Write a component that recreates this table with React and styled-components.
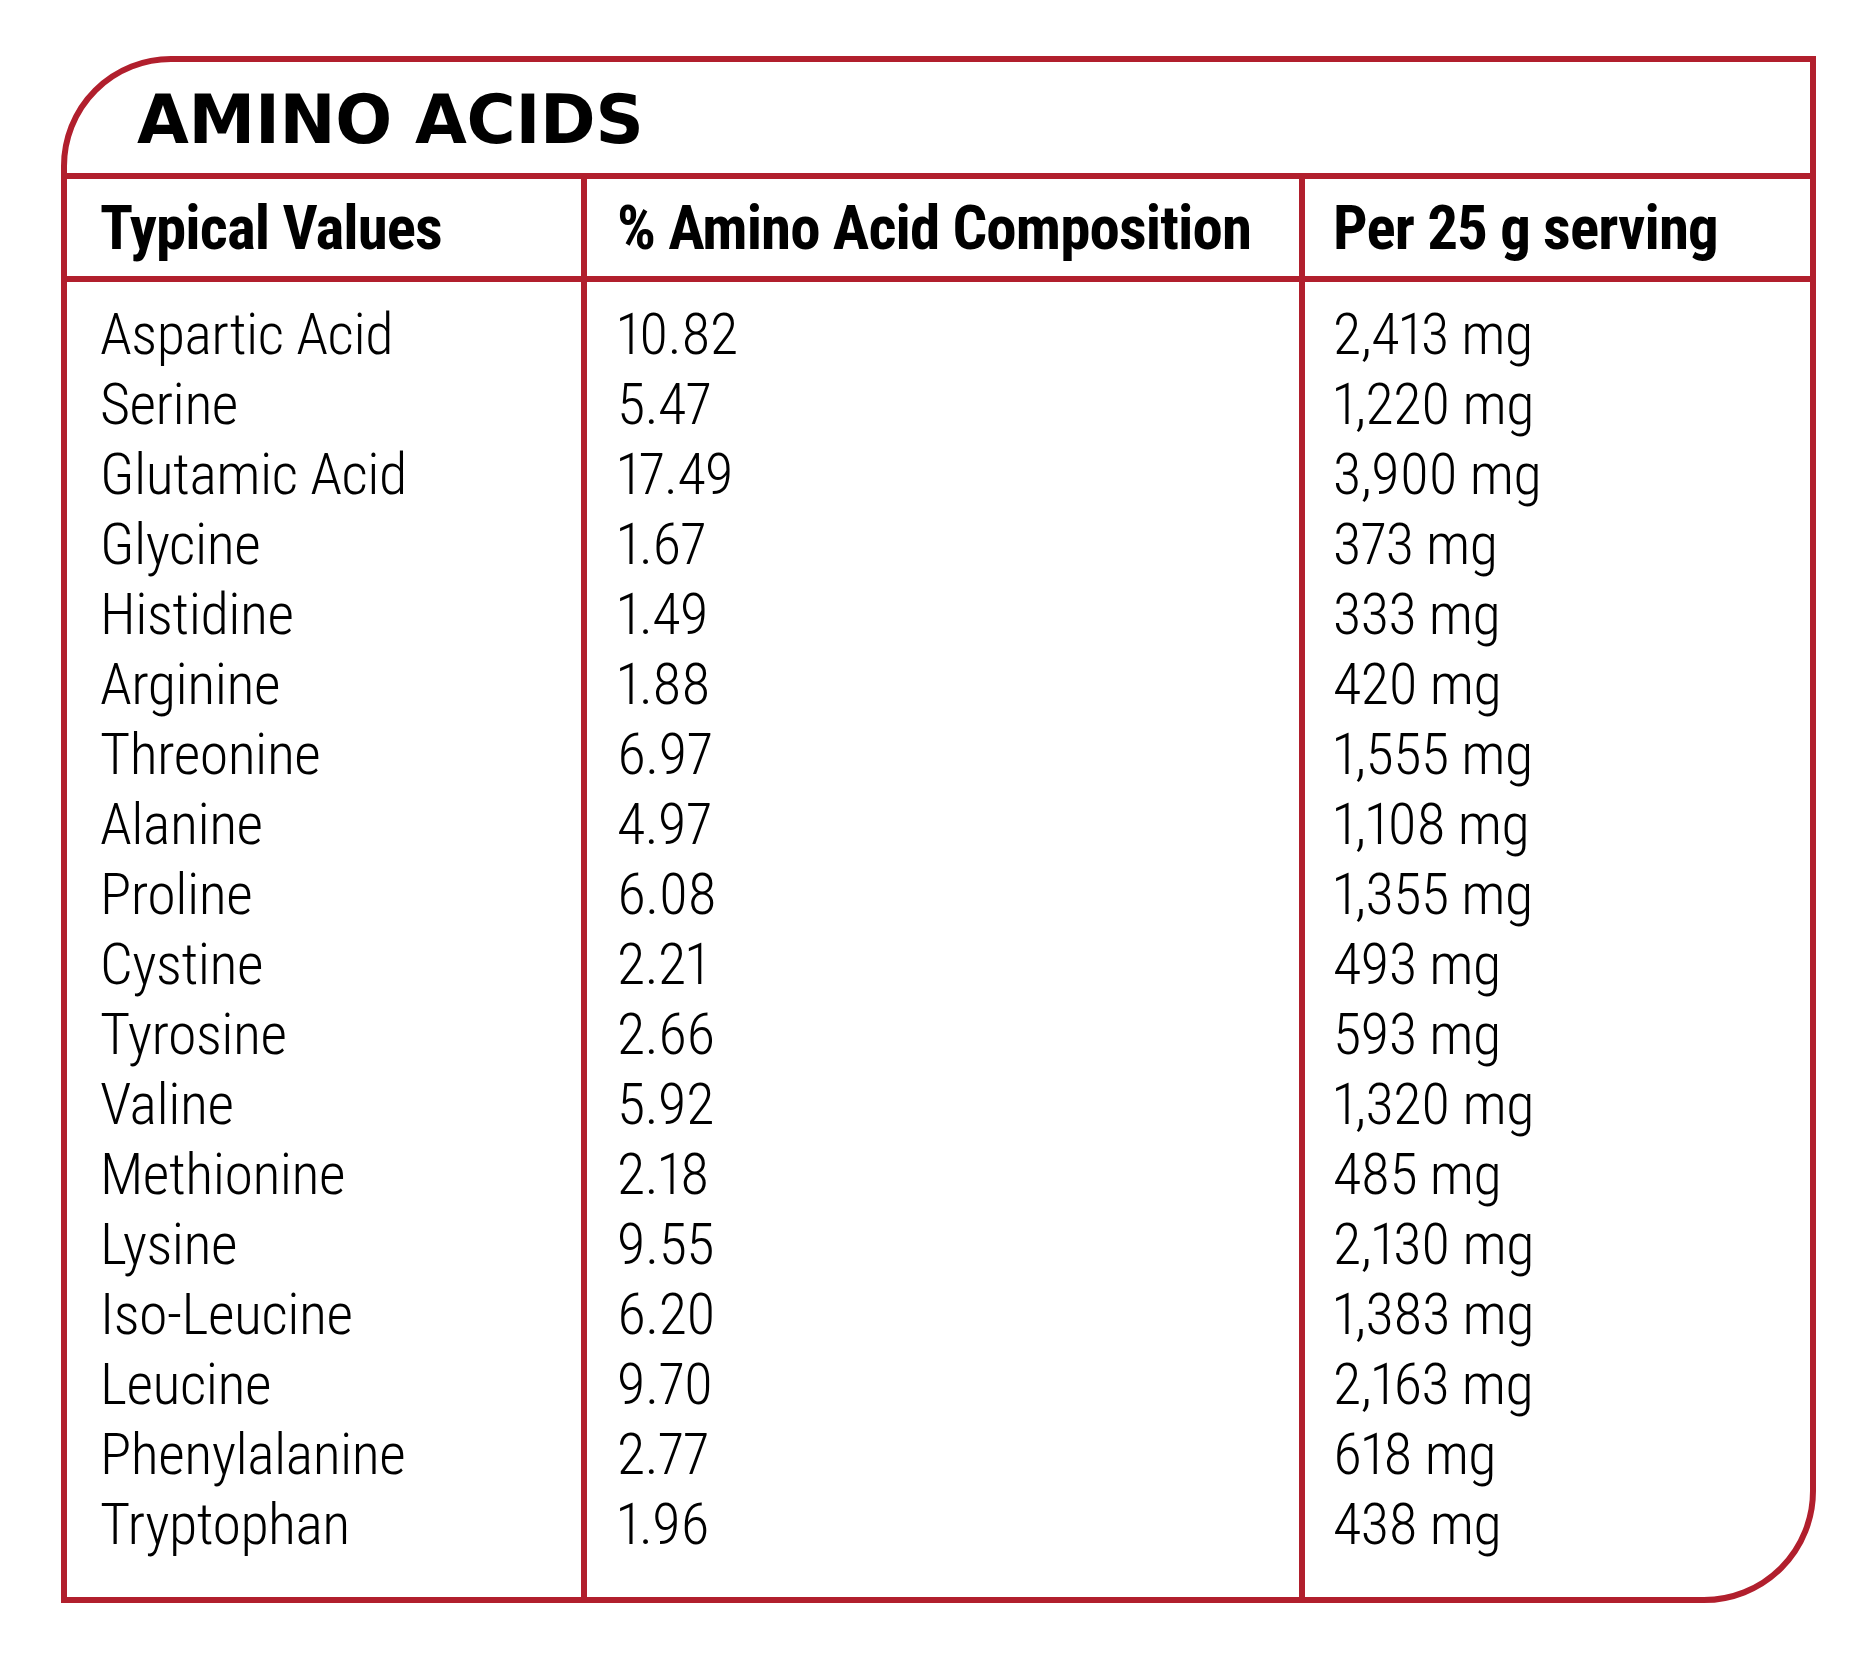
import React from "react";
import styled, { createGlobalStyle } from "styled-components";

const RED = "#b11f2d";
const LINE = "6px";

const GlobalStyle = createGlobalStyle`
  html, body { margin: 0; padding: 0; background: #ffffff; }
  * { box-sizing: border-box; }
`;

const Page = styled.div`
  padding: 56px 0 0 61px;
  width: 1875px;
  height: 1667px;
  overflow: hidden;
`;

const Card = styled.section`
  width: 1755px;
  border: ${LINE} solid ${RED};
  border-radius: 110px 0 112px 0;
  overflow: hidden;
  background: #fff;
`;

const Title = styled.h1`
  margin: 0;
  height: 117px;
  padding: 25px 0 0 70px;
  border-bottom: ${LINE} solid ${RED};
  font-family: "DejaVu Sans", "Liberation Sans", sans-serif;
  font-weight: 700;
  font-size: 67px;
  line-height: 67px;
  letter-spacing: -0.3px;
  color: #000;
`;

const cols = "520px 718px 505px";

const HeaderRow = styled.div`
  display: grid;
  grid-template-columns: ${cols};
  height: 103px;
  border-bottom: ${LINE} solid ${RED};
`;

const HeadCell = styled.div`
  padding-left: ${(p) => p.$pad}px;
  border-right: ${(p) => (p.$last ? "none" : `${LINE} solid ${RED}`)};
  font-family: "Roboto", "Liberation Sans", sans-serif;
  font-stretch: 75%;
  font-weight: 700;
  font-size: 61px;
  line-height: 98px;
  letter-spacing: -0.9px;
  color: #000;
  white-space: nowrap;
`;

const Body = styled.div`
  display: grid;
  grid-template-columns: ${cols};
  height: 1315px;
`;

const Column = styled.div`
  padding: 17px 0 0 ${(p) => p.$pad}px;
  border-right: ${(p) => (p.$last ? "none" : `${LINE} solid ${RED}`)};
  display: flex;
  flex-direction: column;
`;

const Cell = styled.div`
  font-family: "Roboto", "Liberation Sans", sans-serif;
  font-stretch: 75%;
  font-weight: 320;
  font-size: 58px;
  line-height: 70px;
  height: 70px;
  letter-spacing: -0.5px;
  font-variant-numeric: proportional-nums;
  color: #000;
  white-space: nowrap;
`;

const rows = [
  ["Aspartic Acid", "10.82", "2,413 mg"],
  ["Serine", "5.47", "1,220 mg"],
  ["Glutamic Acid", "17.49", "3,900 mg"],
  ["Glycine", "1.67", "373 mg"],
  ["Histidine", "1.49", "333 mg"],
  ["Arginine", "1.88", "420 mg"],
  ["Threonine", "6.97", "1,555 mg"],
  ["Alanine", "4.97", "1,108 mg"],
  ["Proline", "6.08", "1,355 mg"],
  ["Cystine", "2.21", "493 mg"],
  ["Tyrosine", "2.66", "593 mg"],
  ["Valine", "5.92", "1,320 mg"],
  ["Methionine", "2.18", "485 mg"],
  ["Lysine", "9.55", "2,130 mg"],
  ["Iso-Leucine", "6.20", "1,383 mg"],
  ["Leucine", "9.70", "2,163 mg"],
  ["Phenylalanine", "2.77", "618 mg"],
  ["Tryptophan", "1.96", "438 mg"],
];

const headers = [
  { text: "Typical Values", pad: 33 },
  { text: "% Amino Acid Composition", pad: 30 },
  { text: "Per 25 g serving", pad: 28 },
];

export default function App() {
  return (
    <>
      <GlobalStyle />
      <Page>
        <Card>
          <Title>AMINO ACIDS</Title>
          <HeaderRow>
            {headers.map((h, i) => (
              <HeadCell key={h.text} $pad={h.pad} $last={i === 2}>
                {h.text}
              </HeadCell>
            ))}
          </HeaderRow>
          <Body>
            {headers.map((h, c) => (
              <Column key={c} $pad={h.pad} $last={c === 2}>
                {rows.map((r) => (
                  <Cell key={r[0]}>{r[c]}</Cell>
                ))}
              </Column>
            ))}
          </Body>
        </Card>
      </Page>
    </>
  );
}
